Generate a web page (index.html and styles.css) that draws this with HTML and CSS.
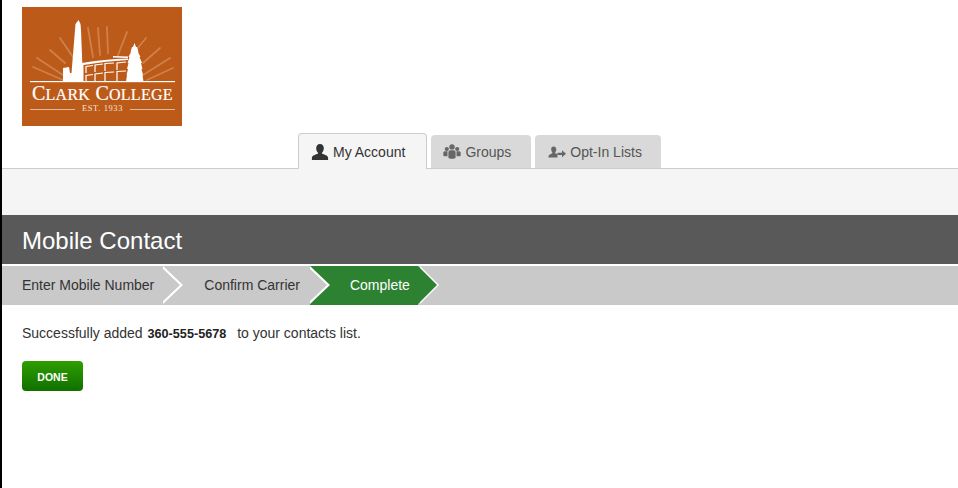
FILE: index.html
```html
<!DOCTYPE html>
<html>
<head>
  <title>Mobile Contact</title>
  <link rel="stylesheet" href="styles.css">
</head>
<body>
  <div class="logo-row">
    <svg class="logo" viewBox="0 0 160 119" role="img" aria-label="Clark College">
      <rect width="160" height="119" fill="#bc5a1a"/>
      <!-- sun rays -->
      <g stroke="#e2a87c" stroke-width="1.800" stroke-opacity="0.5" stroke-linecap="round" fill="none">
        <path d="M11 60 L41 73"/>
        <path d="M15 51 L41 68"/>
        <path d="M28 43 L43 56"/>
        <path d="M38 31 L51 50"/>
        <path d="M66 21 L71 50"/>
        <path d="M76 21 L78 48"/>
        <path d="M85 20 L86 46"/>
        <path d="M105 25 L96 48"/>
        <path d="M124 31 L110 48"/>
        <path d="M138 41 L121 56"/>
        <path d="M148 51 L121 68"/>
        <path d="M151 61 L125 73"/>
      </g>
      <!-- tower and wing -->
      <path fill="#fff" d="M41 74.500 L41 61 L47 60 L48 66 L49.500 66 L53 23 L53.500 17 L56.500 13 L58.500 17 L59 23 L61 74.500 Z"/>
      <!-- building -->
      <path fill="#fff" d="M60 56 Q82 52 106 51.500 L106 53 Q84 54 61.500 58 L61.500 74.500 L60 74.500 Z"/>
      <path fill="#fff" d="M91 49 L106 49.500 L106 51 L91 50.500 Z"/>
      <g stroke="#fff" stroke-width="1.200" fill="none">
        <path d="M64 66 L64 59.500 L71 58.500 M73 65 L73 58 L81 57 M83 64 L83 56.500 L92 56 M95 63 L95 56 L104 55"/>
        <path d="M64 74.500 L64 68.500 L71 67.500 M73 74.500 L73 67 L81 66 M83 74.500 L83 65.500 L92 65 M95 74.500 L95 64.500 L104 64"/>
      </g>
      <!-- fir tree -->
      <path fill="#fff" d="M112.500 36 L114 40 L115 40 L116.500 45 L116 45 L118.500 50 L117.500 50 L120 56 L119 56 L120.500 62 L119.500 62 L121 68 L120.500 68 L121.500 74.500 L104 74.500 L105 68 L104.500 68 L106 62 L105 62 L106.500 56 L105.500 56 L107.500 50 L106.500 50 L109 45 L108.500 45 L110 40 L111 40 Z"/>
      <rect x="8" y="74" width="145" height="1.200" fill="#fff"/>
      <text class="logo-name" x="80.500" y="93" text-anchor="middle" textLength="141">C<tspan class="logo-small">LARK</tspan> C<tspan class="logo-small">OLLEGE</tspan></text>
      <rect x="8" y="102" width="45" height="0.800" fill="#eecfb5"/>
      <text class="logo-est" x="80.500" y="104" text-anchor="middle">EST. 1933</text>
      <rect x="108" y="102" width="45" height="0.800" fill="#eecfb5"/>
    </svg>
  </div>

  <ul class="tabs">
    <li class="tab active">
      <svg class="tab-icon" viewBox="0 0 18 16"><path d="M9 0c2.400 0 3.800 1.900 3.800 4.200 0 1.700-.7 3.300-1.700 4.200v1.300c1.900.8 6 1.500 6 4.100V16H.9v-2.200c0-2.600 4.100-3.300 6-4.100V8.400C5.900 7.500 5.200 5.900 5.200 4.200 5.200 1.900 6.600 0 9 0z"/></svg>
      My Account
    </li>
    <li class="tab">
      <svg class="tab-icon" viewBox="0 0 18 16"><circle cx="9" cy="2.900" r="2.700"/><circle cx="3.800" cy="5" r="2.100"/><circle cx="14.200" cy="5" r="2.100"/><path d="M5.400 8.300c0-1.200 1-2 2-2h3.200c1 0 2 .8 2 2v5.500c-1 1.300-6.200 1.300-7.200 0zM.3 8.900c0-1 .7-1.600 1.700-1.600h2.500v5H1.800C.8 12.300.3 12 .3 11zM17.700 8.900c0-1-.7-1.600-1.700-1.600h-2.500v5h2.700c1 0 1.500-.3 1.500-1.300z"/></svg>
      Groups
    </li>
    <li class="tab opt-in">
      <svg class="tab-icon" viewBox="0 0 18 16"><path d="M5.500 2.500c1.800 0 2.800 1.300 2.800 3 0 1.100-.5 2.200-1.100 2.800v1l2.300.8v3.400H.5v-1.300c0-1.500 2.700-2.200 3.800-2.900v-1C3.700 7.700 3.200 6.600 3.200 5.500c0-1.700.5-3 2.300-3z"/><path d="M9.500 8.700h4.500V6.300L18 9.800l-4 3.500v-2.400H9.500z"/></svg>
      Opt-In Lists
    </li>
  </ul>

  <div class="sub-band"></div>

  <h1 class="page-title">Mobile Contact</h1>

  <ol class="steps">
    <li class="step first">Enter Mobile Number</li>
    <li class="step">Confirm Carrier</li>
    <li class="step current">Complete</li>
  </ol>

  <div class="content">
    <p class="message">Successfully added <strong class="number">360-555-5678</strong> to your contacts list.</p>
    <button class="done-btn">DONE</button>
  </div>
</body>
</html>
```

FILE: styles.css
```css
body {
  margin: 0;
  min-height: 488px;
  box-sizing: border-box;
  border-left: 2px solid #000;
  background-color: #fff;
  font-family: "Liberation Sans", Arial, sans-serif;
  font-size: 14px;
  color: #333;
  overflow: hidden;
}

.logo-row {
  padding: 7px 0 0 20px;
  height: 127px;
  box-sizing: border-box;
}
.logo {
  display: block;
  width: 160px;
  height: 119px;
}
.logo-name {
  font-family: "Liberation Serif", serif;
  font-size: 20px;
  stroke: #fff;
  stroke-width: 0.2px;
  letter-spacing: 0.5px;
  fill: #fff;
}
.logo-small {
  font-size: 16px;
}
.logo-est {
  font-family: "Liberation Serif", serif;
  font-size: 8.500px;
  letter-spacing: 0.6px;
  fill: #f6e4d6;
}

.tabs {
  display: flex;
  align-items: flex-end;
  gap: 4px;
  list-style: none;
  margin: 0;
  padding: 0 0 0 296px;
  height: 42px;
  box-sizing: border-box;
  border-bottom: 1px solid #ccc;
}
.tab {
  display: flex;
  align-items: center;
  height: 33px;
  padding: 0 20px 0 12px;
  background-color: #d9d9d9;
  border-radius: 4px 4px 0 0;
  color: #555;
}
.tab.active {
  height: 35px;
  margin-bottom: -1px;
  padding: 0 21px 0 12px;
  background-color: #f5f5f5;
  border: 1px solid #ccc;
  border-bottom: none;
  color: #333;
}
.tab.opt-in {
  padding: 0 19px 0 13px;
}
.tab-icon {
  width: 18px;
  height: 16px;
  margin-right: 4px;
  fill: #666;
}
.tab.active .tab-icon {
  fill: #333;
}

.sub-band {
  height: 46px;
  background-color: #f5f5f5;
}

.page-title {
  margin: 0;
  height: 49px;
  line-height: 52px;
  padding-left: 20px;
  background-color: #595959;
  color: #fff;
  font-size: 24px;
  font-weight: normal;
}

.steps {
  display: flex;
  list-style: none;
  margin: 2px 0 0 0;
  padding: 0;
  height: 39px;
  line-height: 39px;
  background-color: #c9c9c9;
}
.step {
  position: relative;
  padding: 0 7px 0 44px;
  color: #333;
}
.step.first {
  padding: 0 6px 0 20px;
}
/* white edge of the arrow, then the arrow itself on top */
.step::before,
.step::after {
  content: "";
  position: absolute;
  top: 0;
  width: 0;
  height: 0;
  border-top: 19.5px solid transparent;
  border-bottom: 19.5px solid transparent;
  border-left: 20px solid #fff;
}
.step::before {
  right: -23px;
  z-index: 1;
}
.step::after {
  right: -20px;
  border-left-color: #c9c9c9;
  z-index: 2;
}
.step.current {
  margin-left: 3px;
  padding: 0 8px 0 40px;
  background-color: #2d8232;
  color: #fff;
}
.step.current::before {
  right: -21px;
  border-left-width: 19px;
}
.step.current::after {
  right: -19px;
  border-left-width: 19px;
  border-left-color: #2d8232;
}

.content {
  padding: 20px;
}
.message {
  margin: 0 0 19px 0;
  line-height: 16px;
}
.number {
  margin: 0 7px 0 1px;
  font-size: 12.650px;
  color: #222;
}
.done-btn {
  display: block;
  width: 61px;
  height: 30px;
  padding: 1px 0 0 0;
  border: none;
  border-radius: 4px;
  background: linear-gradient(#2f9e00, #0f7000);
  color: #fff;
  font-family: "Liberation Sans", Arial, sans-serif;
  font-size: 10.500px;
  font-weight: bold;
  cursor: pointer;
}
```
